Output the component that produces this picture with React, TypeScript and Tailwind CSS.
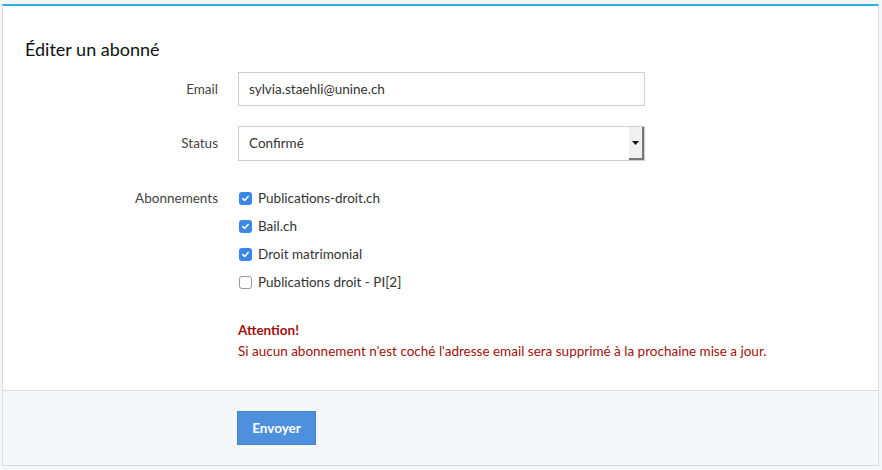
import React from "react";

const font = { fontFamily: "Lato, 'Noto Sans', sans-serif" };

const subs = [
  { name: "Publications-droit.ch", checked: true },
  { name: "Bail.ch", checked: true },
  { name: "Droit matrimonial", checked: true },
  { name: "Publications droit - PI[2]", checked: false },
];

const Check = ({ checked }: { checked: boolean }) =>
  checked ? (
    <span className="flex h-[13px] w-[13px] items-center justify-center rounded-[3px] bg-[#3b87e6]">
      <svg width="9" height="9" viewBox="0 0 10 10">
        <path d="M2 5.2l2 2 4-4.4" fill="none" stroke="#fff" strokeWidth="1.8" strokeLinecap="round" strokeLinejoin="round" />
      </svg>
    </span>
  ) : (
    <span className="block h-[13px] w-[13px] rounded-[3px] border border-[#9a9a9a] bg-white" />
  );

export default function App() {
  return (
    <div className="h-[470px] w-[882px] bg-[#f5f6f8] pt-[4px] text-[13.5px] text-[#333]" style={font}>
      <div className="ml-[2px] w-[877px] border-x border-b border-t-2 border-x-[#dcdcdc] border-b-[#dcdcdc] border-t-[#29b6dc] bg-white">
        <div className="px-[22px] pt-[31px] pb-[11px]">
          <h2 className="text-[18px] leading-[24px] text-[#111]">Éditer un abonné</h2>
        </div>

        <div className="flex flex-col">
          <div className="flex items-center">
            <label className="w-[215px] text-right text-[#444]">Email</label>
            <div className="ml-[20px] flex h-[34px] w-[407px] items-center border border-[#cfcfcf] px-[10px] text-[#333]">
              sylvia.staehli@unine.ch
            </div>
          </div>

          <div className="mt-[20px] flex items-center">
            <label className="w-[215px] text-right text-[#444]">Status</label>
            <div className="ml-[20px] flex h-[35px] w-[407px] items-center border border-[#cfcfcf] pl-[10px] text-[#333]">
              <span className="flex-1">Confirmé</span>
              <span className="flex h-[33px] w-[15px] items-center justify-center border-b-2 border-r-2 border-b-[#777] border-r-[#777] bg-[#f0f0f0]">
                <svg width="7" height="4" viewBox="0 0 7 4">
                  <path d="M0 0h7L3.5 4z" fill="#111" />
                </svg>
              </span>
            </div>
          </div>

          <div className="mt-[28px] flex">
            <label className="w-[215px] text-right leading-[18px] text-[#444]">Abonnements</label>
            <div className="ml-[20px] flex flex-col gap-[10px]">
              {subs.map((s) => (
                <div key={s.name} className="flex h-[18px] items-center gap-[6px]">
                  <span className="ml-[1px]">
                    <Check checked={s.checked} />
                  </span>
                  <span className="text-[#333]">{s.name}</span>
                </div>
              ))}
            </div>
          </div>

          <div className="ml-[235px] mt-[29px] pb-[28px] text-[#a01010]">
            <div className="font-bold leading-[20px]">Attention!</div>
            <div className="leading-[22px]">
              Si aucun abonnement n'est coché l'adresse email sera supprimé à la prochaine mise a jour.
            </div>
          </div>
        </div>

        <div className="border-t border-[#dcdcdc] bg-[#f6f7f9] pb-[20px] pt-[20px]">
          <button className="ml-[234px] h-[34px] w-[79px] border border-[#4584d2] bg-[#4e8fde] font-bold text-white">
            Envoyer
          </button>
        </div>
      </div>
    </div>
  );
}
